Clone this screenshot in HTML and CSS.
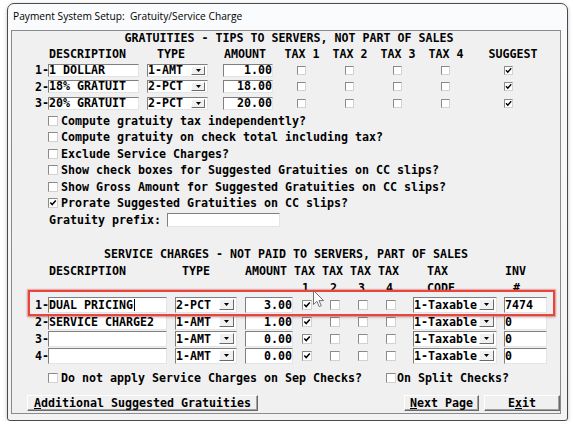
FILE: index.html
```html
<!DOCTYPE html>
<html lang="en">
<head>
<meta charset="utf-8">
<title>Payment System Setup: Gratuity/Service Charge</title>
<link rel="stylesheet" href="styles.css">
</head>
<body>
<div class="window">
  <div class="titlebar">Payment System Setup:&nbsp; Gratuity/Service Charge</div>
  <div class="client">
    <div class="sec-title g-title">GRATUITIES - TIPS TO SERVERS, NOT PART OF SALES</div>

    <div class="grow g-head">
      <span class="g-num"></span>
      <span class="g-desc">DESCRIPTION</span>
      <span class="g-type">TYPE</span>
      <span class="g-amt">AMOUNT</span>
      <span class="g-tax first">TAX 1</span>
      <span class="g-tax">TAX 2</span>
      <span class="g-tax">TAX 3</span>
      <span class="g-tax">TAX 4</span>
      <span class="g-sug">SUGGEST</span>
    </div>

    <div class="grow g-row">
      <span class="g-num">1-</span>
      <span class="g-desc field">1 DOLLAR</span>
      <span class="g-type sel"><span class="val">1-AMT</span><span class="dd"><svg width="5" height="3" viewBox="0 0 5 3"><path d="M0 0H5L2.5 3Z" fill="#000"/></svg></span></span>
      <span class="g-amt field r">1.00</span>
      <span class="g-tax first"><span class="cb sm"></span></span>
      <span class="g-tax"><span class="cb sm"></span></span>
      <span class="g-tax"><span class="cb sm"></span></span>
      <span class="g-tax"><span class="cb sm"></span></span>
      <span class="g-sug"><span class="cb sm"><svg width="7" height="7" viewBox="0 0 7 7"><path d="M1 3.2 2.8 5.2 6.2 1.3" fill="none" stroke="#000" stroke-width="1.4"/></svg></span></span>
    </div>
    <div class="grow g-row">
      <span class="g-num">2-</span>
      <span class="g-desc field">18% GRATUIT</span>
      <span class="g-type sel"><span class="val">2-PCT</span><span class="dd"><svg width="5" height="3" viewBox="0 0 5 3"><path d="M0 0H5L2.5 3Z" fill="#000"/></svg></span></span>
      <span class="g-amt field r">18.00</span>
      <span class="g-tax first"><span class="cb sm"></span></span>
      <span class="g-tax"><span class="cb sm"></span></span>
      <span class="g-tax"><span class="cb sm"></span></span>
      <span class="g-tax"><span class="cb sm"></span></span>
      <span class="g-sug"><span class="cb sm"><svg width="7" height="7" viewBox="0 0 7 7"><path d="M1 3.2 2.8 5.2 6.2 1.3" fill="none" stroke="#000" stroke-width="1.4"/></svg></span></span>
    </div>
    <div class="grow g-row">
      <span class="g-num">3-</span>
      <span class="g-desc field">20% GRATUIT</span>
      <span class="g-type sel"><span class="val">2-PCT</span><span class="dd"><svg width="5" height="3" viewBox="0 0 5 3"><path d="M0 0H5L2.5 3Z" fill="#000"/></svg></span></span>
      <span class="g-amt field r">20.00</span>
      <span class="g-tax first"><span class="cb sm"></span></span>
      <span class="g-tax"><span class="cb sm"></span></span>
      <span class="g-tax"><span class="cb sm"></span></span>
      <span class="g-tax"><span class="cb sm"></span></span>
      <span class="g-sug"><span class="cb sm"><svg width="7" height="7" viewBox="0 0 7 7"><path d="M1 3.2 2.8 5.2 6.2 1.3" fill="none" stroke="#000" stroke-width="1.4"/></svg></span></span>
    </div>

    <div class="opts">
      <div class="opt"><span class="cb"></span><span>Compute gratuity tax independently?</span></div>
      <div class="opt"><span class="cb"></span><span>Compute gratuity on check total including tax?</span></div>
      <div class="opt"><span class="cb"></span><span>Exclude Service Charges?</span></div>
      <div class="opt"><span class="cb"></span><span>Show check boxes for Suggested Gratuities on CC slips?</span></div>
      <div class="opt"><span class="cb"></span><span>Show Gross Amount for Suggested Gratuities on CC slips?</span></div>
      <div class="opt"><span class="cb"><svg width="8" height="8" viewBox="0 0 8 8"><path d="M1.3 3.6 3.2 5.6 6.8 1.6" fill="none" stroke="#000" stroke-width="1.5"/></svg></span><span>Prorate Suggested Gratuities on CC slips?</span></div>
      <div class="opt prefix"><span class="lbl">Gratuity prefix:</span><span class="field pfx"></span></div>
    </div>

    <div class="sec-title sc-title">SERVICE CHARGES - NOT PAID TO SERVERS, PART OF SALES</div>

    <div class="srow sc-head">
      <span class="s-num"></span>
      <span class="s-desc">DESCRIPTION</span>
      <span class="s-type">TYPE</span>
      <span class="s-amt">AMOUNT</span>
      <span class="s-tax first">TAX</span>
      <span class="s-tax">TAX</span>
      <span class="s-tax">TAX</span>
      <span class="s-tax">TAX</span>
      <span class="s-code">TAX</span>
      <span class="s-inv">INV</span>
    </div>
    <div class="srow sc-head2">
      <span class="s-num"></span>
      <span class="s-desc"></span>
      <span class="s-type"></span>
      <span class="s-amt"></span>
      <span class="s-tax first">1</span>
      <span class="s-tax">2</span>
      <span class="s-tax">3</span>
      <span class="s-tax">4</span>
      <span class="s-code">CODE</span>
      <span class="s-inv">#</span>
    </div>

    <div class="sc-rows">
      <div class="srow">
        <span class="s-num">1-</span>
        <span class="s-desc field">DUAL PRICING<span class="caret"></span></span>
        <span class="s-type sel"><span class="val">2-PCT</span><span class="dd"><svg width="5" height="3" viewBox="0 0 5 3"><path d="M0 0H5L2.5 3Z" fill="#000"/></svg></span></span>
        <span class="s-amt field r">3.00</span>
        <span class="s-tax first"><span class="cb"><svg width="8" height="8" viewBox="0 0 8 8"><path d="M1.3 3.6 3.2 5.6 6.8 1.6" fill="none" stroke="#000" stroke-width="1.5"/></svg></span></span>
        <span class="s-tax"><span class="cb"></span></span>
        <span class="s-tax"><span class="cb"></span></span>
        <span class="s-tax"><span class="cb"></span></span>
        <span class="s-code sel"><span class="val">1-Taxable</span><span class="dd"><svg width="5" height="3" viewBox="0 0 5 3"><path d="M0 0H5L2.5 3Z" fill="#000"/></svg></span></span>
        <span class="s-inv field">7474</span>
      </div>
      <div class="srow">
        <span class="s-num">2-</span>
        <span class="s-desc field">SERVICE CHARGE2</span>
        <span class="s-type sel"><span class="val">1-AMT</span><span class="dd"><svg width="5" height="3" viewBox="0 0 5 3"><path d="M0 0H5L2.5 3Z" fill="#000"/></svg></span></span>
        <span class="s-amt field r">1.00</span>
        <span class="s-tax first"><span class="cb"><svg width="8" height="8" viewBox="0 0 8 8"><path d="M1.3 3.6 3.2 5.6 6.8 1.6" fill="none" stroke="#000" stroke-width="1.5"/></svg></span></span>
        <span class="s-tax"><span class="cb"></span></span>
        <span class="s-tax"><span class="cb"></span></span>
        <span class="s-tax"><span class="cb"></span></span>
        <span class="s-code sel"><span class="val">1-Taxable</span><span class="dd"><svg width="5" height="3" viewBox="0 0 5 3"><path d="M0 0H5L2.5 3Z" fill="#000"/></svg></span></span>
        <span class="s-inv field">0</span>
      </div>
      <div class="srow">
        <span class="s-num">3-</span>
        <span class="s-desc field"></span>
        <span class="s-type sel"><span class="val">1-AMT</span><span class="dd"><svg width="5" height="3" viewBox="0 0 5 3"><path d="M0 0H5L2.5 3Z" fill="#000"/></svg></span></span>
        <span class="s-amt field r">0.00</span>
        <span class="s-tax first"><span class="cb"><svg width="8" height="8" viewBox="0 0 8 8"><path d="M1.3 3.6 3.2 5.6 6.8 1.6" fill="none" stroke="#000" stroke-width="1.5"/></svg></span></span>
        <span class="s-tax"><span class="cb"></span></span>
        <span class="s-tax"><span class="cb"></span></span>
        <span class="s-tax"><span class="cb"></span></span>
        <span class="s-code sel"><span class="val">1-Taxable</span><span class="dd"><svg width="5" height="3" viewBox="0 0 5 3"><path d="M0 0H5L2.5 3Z" fill="#000"/></svg></span></span>
        <span class="s-inv field">0</span>
      </div>
      <div class="srow">
        <span class="s-num">4-</span>
        <span class="s-desc field"></span>
        <span class="s-type sel"><span class="val">1-AMT</span><span class="dd"><svg width="5" height="3" viewBox="0 0 5 3"><path d="M0 0H5L2.5 3Z" fill="#000"/></svg></span></span>
        <span class="s-amt field r">0.00</span>
        <span class="s-tax first"><span class="cb"><svg width="8" height="8" viewBox="0 0 8 8"><path d="M1.3 3.6 3.2 5.6 6.8 1.6" fill="none" stroke="#000" stroke-width="1.5"/></svg></span></span>
        <span class="s-tax"><span class="cb"></span></span>
        <span class="s-tax"><span class="cb"></span></span>
        <span class="s-tax"><span class="cb"></span></span>
        <span class="s-code sel"><span class="val">1-Taxable</span><span class="dd"><svg width="5" height="3" viewBox="0 0 5 3"><path d="M0 0H5L2.5 3Z" fill="#000"/></svg></span></span>
        <span class="s-inv field">0</span>
      </div>
      <div class="hilite"></div>
      <svg class="cursor" width="12" height="18" viewBox="0 0 12 18"><path d="M0.5 0.5V14.5L3.9 11.3 6.2 16.6 8.3 15.7 6 10.6H10.6Z" fill="#fff" stroke="#707070" stroke-width="1" stroke-linejoin="round"/></svg>
    </div>

    <div class="opt sc-opt"><span class="cb"></span><span>Do not apply Service Charges on Sep Checks?</span><span class="cb split"></span><span>On Split Checks?</span></div>

    <div class="btnrow">
      <button class="btn wide"><u>A</u>dditional Suggested Gratuities</button>
      <button class="btn np"><u>N</u>ext Page</button>
      <button class="btn ex">E<u>x</u>it</button>
    </div>
  </div>
</div>
</body>
</html>
```

FILE: styles.css
```css
* { box-sizing: border-box; }
html, body { margin: 0; padding: 0; background: #ffffff; }
body {
  font-family: "DejaVu Sans Mono", "Liberation Mono", monospace;
  font-size: 11.63px;
  font-weight: bold;
  color: #000;
}

.window {
  margin: 3px 0 0 7px;
  width: 561px;
  height: 418px;
  border: 1px solid #4a4a4a;
  border-radius: 7px 7px 3px 3px;
  background: linear-gradient(#fafbfc, #f1f3f5);
  box-shadow: 0 1px 4px rgba(0,0,0,0.22);
}
.titlebar {
  height: 26px;
  padding-left: 5px;
  font-family: "Open Sans", "Noto Sans", sans-serif;
  font-weight: normal;
  font-size: 10.2px;
  line-height: 24px;
  color: #000;
  white-space: pre;
}
.client {
  margin: 0 6px 0 3px;
  height: 384px;
  border: 1px solid #8a8a8a;
  background: #f0f0f0;
}

.sec-title { text-align: center; white-space: pre; }
.g-title { height: 15px; line-height: 15px; padding-left: 6px; }

/* gratuity table */
.grow { display: flex; align-items: center; padding-left: 23px; white-space: pre; }
.g-head { height: 16px; line-height: 16px; }
.g-row { height: 16.5px; }
.g-num { width: 13px; flex: none; }
.g-desc { width: 91px; flex: none; }
.g-type { width: 61px; margin-left: 8px; flex: none; }
.g-amt { width: 50px; margin-left: 15px; flex: none; }
.g-tax { width: 48px; flex: none; }
.g-tax.first { margin-left: 5px; }
.g-sug { width: 86px; flex: none; }
.g-head .g-desc { padding-left: 1px; }
.g-head .g-type { padding-left: 10px; }
.g-head .g-amt { padding-left: 1px; }
.g-head .g-tax, .g-head .g-sug { text-align: center; }
.g-row .g-tax { display: flex; padding-left: 19px; }
.g-row .g-sug { display: flex; padding-left: 34px; }

/* fields */
.field {
  display: flex;
  align-items: center;
  height: 13px;
  background: #fff;
  border: 1px solid;
  border-color: #7f7f7f #e4e4e4 #e4e4e4 #7f7f7f;
  line-height: 11px;
  overflow: hidden;
  white-space: pre;
}
.field.r { justify-content: flex-end; }
.sel {
  display: flex;
  align-items: center;
  height: 13px;
  background: #fff;
  border: 1px solid;
  border-color: #7f7f7f #e4e4e4 #e4e4e4 #7f7f7f;
  line-height: 11px;
  white-space: pre;
}
.sel .val { flex: 1; }
.dd {
  flex: none;
  display: flex;
  align-items: center;
  justify-content: center;
  width: 14px;
  height: 9px;
  margin-right: 2px;
  background: #f0f0f0;
  border: 1px solid;
  border-color: #ffffff #6a6a6a #6a6a6a #ffffff;
}
.dd svg { display: block; }
.caret { display: inline-block; width: 1px; height: 12px; background: #000; margin-left: 1px; }

/* checkboxes */
.cb {
  flex: none;
  display: flex;
  align-items: center;
  justify-content: center;
  width: 10px;
  height: 10px;
  background: #fff;
  border: 1px solid;
  border-color: #8a8a8a #d2d2d2 #d2d2d2 #8a8a8a;
}
.cb.sm { width: 9px; height: 9px; }
.cb svg { display: block; }

/* options */
.opts { margin-top: 1px; padding-left: 36px; }
.opt { display: flex; align-items: center; height: 16.5px; white-space: pre; }
.opt .cb { margin-right: 3px; }
.prefix .lbl { margin-left: 1px; }
.pfx { width: 113px; height: 14px; margin-left: 6px; }

/* service charges */
.sc-title { margin-top: 18px; height: 17px; line-height: 17px; }
.srow { display: flex; align-items: center; padding-left: 23px; white-space: pre; }
.sc-head { height: 17px; line-height: 17px; }
.sc-head2 { height: 16px; line-height: 16px; }
.s-num { width: 13px; flex: none; }
.s-desc { width: 119px; flex: none; }
.s-type { width: 62px; margin-left: 8px; flex: none; }
.s-amt { width: 48px; margin-left: 8px; flex: none; }
.s-tax { width: 28px; flex: none; }
.s-tax.first { margin-left: 1px; }
.s-code { width: 84px; margin-left: 7px; flex: none; }
.s-inv { width: 43px; margin-left: 7px; flex: none; }
.sc-head .s-desc { padding-left: 1px; }
.sc-head .s-type { padding-left: 7px; }
.sc-head .s-inv { padding-left: 1px; }
.sc-head .s-code, .sc-head2 .s-code { padding-left: 14px; }
.sc-head2 .s-tax { padding-left: 8px; }
.sc-head2 .s-inv { padding-left: 9px; }

.sc-rows { position: relative; }
.sc-rows .srow { height: 17px; }
.sc-rows .field, .sc-rows .sel { height: 16px; line-height: 14px; }
.sc-rows .dd { width: 15px; height: 11px; }
.sc-rows .s-tax { display: flex; padding-left: 8px; }

.hilite {
  position: absolute;
  left: 16px;
  top: -6px;
  width: 527px;
  height: 26px;
  border: 2px solid #e8453f;
  box-shadow: 0 0 1px 1px rgba(232,69,63,0.35), 0 1px 3px rgba(0,0,0,0.25);
}
.cursor { position: absolute; left: 301px; top: -6px; display: block; }

.sc-opt { margin-top: 6px; height: 16px; padding-left: 36px; }
.sc-opt .split { margin-left: 24px; margin-right: 1px; }

/* buttons */
.btnrow { display: flex; margin-top: 9px; height: 16px; padding-left: 15px; }
.btn {
  height: 16px;
  padding: 0;
  font: inherit;
  color: #000;
  line-height: 14px;
  text-align: center;
  background: #f0f0f0;
  border: 1px solid;
  border-color: #ffffff #696969 #696969 #ffffff;
  box-shadow: inset -1px -1px 0 #a0a0a0;
  white-space: pre;
}
.btn.wide { width: 231px; }
.btn.np { width: 75px; margin-left: auto; }
.btn.ex { width: 76px; margin-left: 5px; }
```
